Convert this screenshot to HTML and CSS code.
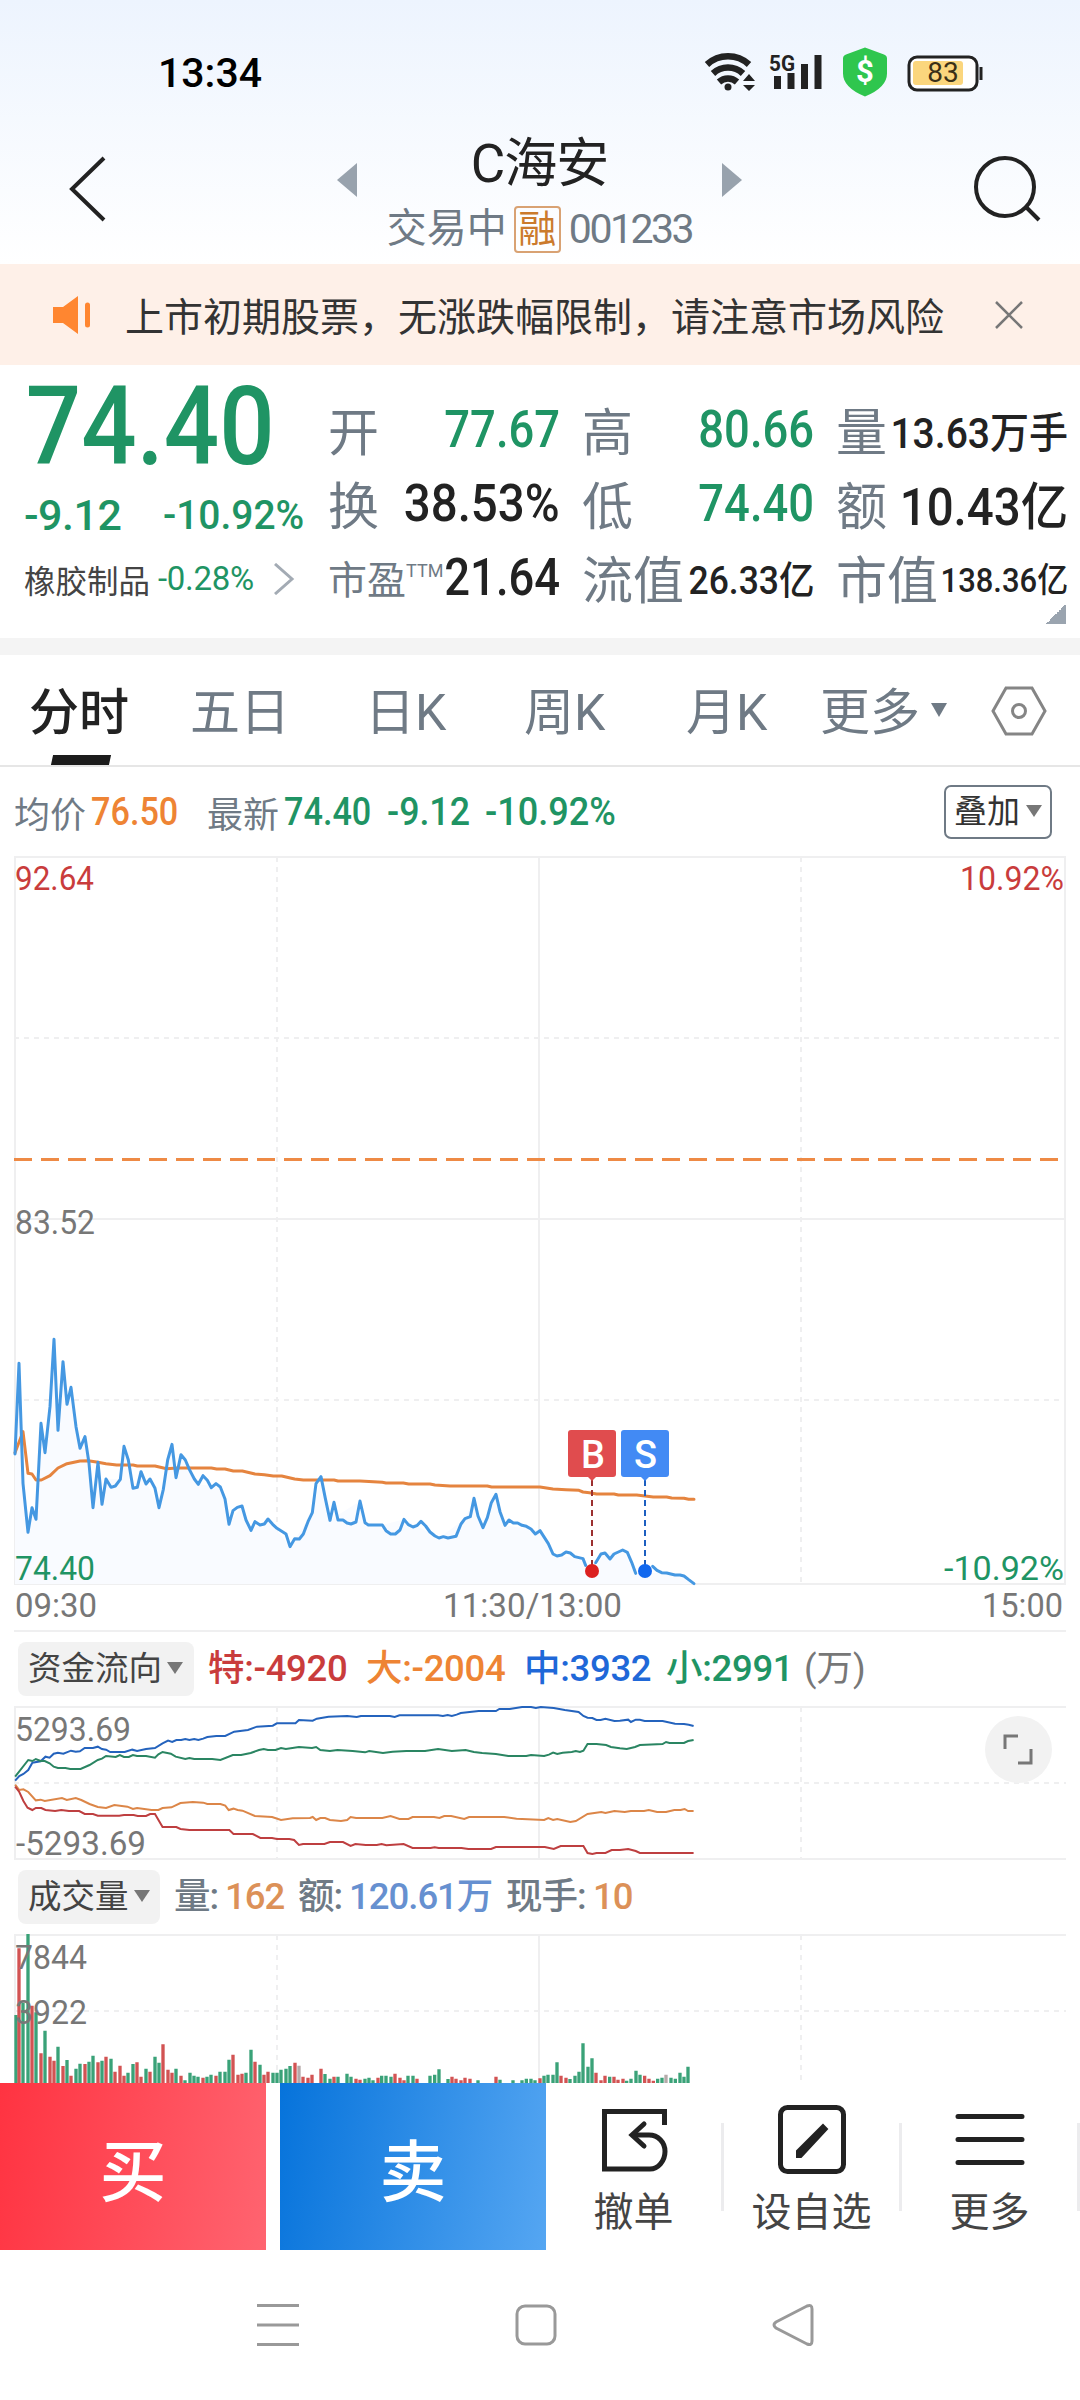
FILE: index.html
```html
<!DOCTYPE html>
<html lang="zh-CN">
<head>
  <meta charset="UTF-8">
  <meta name="viewport" content="width=device-width, initial-scale=1.0">
  <title>C海安 001233</title>
  <link rel="stylesheet" href="styles.css">
</head>
<body>
  <div class="phone">
    <div class="top">
      <!-- Status bar -->
      <div class="status-bar">
        <div class="clock">13:34</div>
        <svg class="status-icons" width="282" height="56" viewBox="702 44 282 56">
          <g fill="none" stroke="#222" stroke-width="6.500">
            <path d="M707 64.500a31 31 0 0 1 42 0"/>
            <path d="M713 73.500a22 22 0 0 1 30 0"/>
            <path d="M719 82a13.500 13.500 0 0 1 18 0"/>
          </g>
          <circle cx="728" cy="87" r="3.500" fill="#222"/>
          <path d="M743 81l6-7 6 7zM743 85l6 6 6-6z" fill="#222"/>
          <text class="net" x="769" y="71" textLength="26" lengthAdjust="spacingAndGlyphs">5G</text>
          <path d="M777.500 76v13M791 73v16M804.500 64v25M818 55v34" stroke="#222" stroke-width="7"/>
          <path d="M865 47.500l19 7q3 1 3 4v15q0 14-22 23q-22-9-22-23v-15q0-3 3-4z" fill="#2fc64e"/>
          <text class="dollar" x="865" y="82">$</text>
          <rect x="909" y="57" width="68" height="33" rx="8" fill="#fff" stroke="#222" stroke-width="3"/>
          <rect x="913" y="61" width="50" height="24" rx="3" fill="#fbd67d"/>
          <path d="M981 67v13" stroke="#222" stroke-width="3"/>
          <text class="battery" x="943" y="82">83</text>
        </svg>
      </div>

      <!-- Header -->
      <div class="header">
        <svg class="back" width="44" height="70" viewBox="0 0 44 70"><path d="M38 4L6 35l32 31"/></svg>
        <svg class="arrow" width="20" height="34" viewBox="0 0 20 34"><path d="M20 0v34L0 17z"/></svg>
        <div class="stock">
          <div class="stock-name">C海安</div>
          <div class="stock-sub">
            <span class="trading">交易中</span>
            <span class="badge">融</span>
            <span class="code">001233</span>
          </div>
        </div>
        <svg class="arrow" width="20" height="34" viewBox="0 0 20 34"><path d="M0 0v34l20-17z"/></svg>
        <svg class="search" width="72" height="70" viewBox="0 0 72 70"><circle cx="34" cy="34" r="29"/><path d="M55 54l13 13"/></svg>
      </div>
    </div>

    <!-- Notice -->
    <div class="notice">
      <svg width="38" height="38" viewBox="0 0 38 38"><path d="M0 11h10L25 0v38L10 27H0z" fill="#ff8630"/><path d="M34.500 9v20" stroke="#ff8630" stroke-width="5" stroke-linecap="round"/></svg>
      <span class="notice-text">上市初期股票，无涨跌幅限制，请注意市场风险</span>
      <svg width="30" height="30" viewBox="0 0 30 30"><path d="M2 2l26 26M28 2L2 28" stroke="#777" stroke-width="2.500"/></svg>
    </div>

    <!-- Quote -->
    <div class="quote">
      <div class="quote-main">
        <div class="price">74.40</div>
        <div class="change"><span class="diff">-9.12</span><span class="pct">-10.92%</span></div>
        <div class="sector">
          <span class="sector-name">橡胶制品</span>
          <span class="sector-pct">-0.28%</span>
          <svg width="22" height="32" viewBox="0 0 22 32"><path d="M2 1l17 15L2 31"/></svg>
        </div>
      </div>
      <div class="quote-grid">
        <div class="cell"><span class="label">开</span><span class="value green">77.67</span></div>
        <div class="cell"><span class="label">高</span><span class="value green">80.66</span></div>
        <div class="cell"><span class="label">量</span><span class="value m">13.63万手</span></div>
        <div class="cell"><span class="label">换</span><span class="value wide">38.53%</span></div>
        <div class="cell"><span class="label">低</span><span class="value green">74.40</span></div>
        <div class="cell"><span class="label">额</span><span class="value wide">10.43亿</span></div>
        <div class="cell"><span class="label small">市盈<sup>TTM</sup></span><span class="value">21.64</span></div>
        <div class="cell"><span class="label">流值</span><span class="value s">26.33亿</span></div>
        <div class="cell"><span class="label">市值</span><span class="value xs">138.36亿</span></div>
      </div>
      <div class="corner"></div>
    </div>

    <!-- Tabs -->
    <div class="tabs">
      <div class="tab active">分时</div>
      <div class="tab">五日</div>
      <div class="tab">日K</div>
      <div class="tab">周K</div>
      <div class="tab">月K</div>
      <div class="tab more">更多<i class="caret"></i></div>
      <svg class="setting" width="56" height="50" viewBox="0 0 56 50"><path d="M15 2h26l13 23-13 23H15L2 25z"/><circle cx="28" cy="25" r="6.500"/></svg>
    </div>

    <div class="summary">
      <span class="grey">均价</span><span class="num orange avg">76.50</span>
      <span class="grey">最新</span><span class="num green last">74.40</span>
      <span class="num green diff2">-9.12</span><span class="num green pct2">-10.92%</span>
      <button class="overlay-btn">叠加<i class="caret"></i></button>
    </div>

    <!-- Time-share chart -->
    <svg class="chart" width="1080" height="777" viewBox="0 0 1080 777">
      <g class="axis">
        <path d="M14 2H1066M14 364H1066M14 729H1066M15 2V729M539 2V729M1065 2V729M14 776H1066"/>
        <path class="dash" d="M14 183H1066M14 545H1066M277 2V729M801 2V729"/>
      </g>
      <path class="limit" d="M14 304.500H1062"/>
      <g transform="translate(0 445) scale(.33333)">
        <path class="area" d="M45 852V462L57 190 69 550 84 697 96 623 108 658 123 370 135 458 150 320 162 118 174 391 189 185 201 313 213 262 228 380 240 445 255 410 279 623 294 487 306 613 318 537 361 538 372 439 399 565 423 515 477 623 516 433 528 533 543 464 595 553 661 561 687 673 726 618 753 691 804 657 870 740 937 638 963 530 990 661 1080 603 1095 668 1147 675 1212 658 1317 714 1395 656 1422 595 1449 683 1488 583 1515 676 1620 692 1671 768 1749 776 1776 815 1815 759 1868 750 1908 820 2000 819 2052 828 2082 852z"/>
        <polyline class="avg-line" points="45,458 69,395 84,520 96,522 108,540 124,540 150,527 174,504 201,491 240,483 265,482 294,487 318,491 350,495 399,495 412,498 465,498 500,506 530,504 634,504 650,507 675,507 700,513 727,513 765,522 793,524 820,528 845,528 884,537 910,540 1002,540 1014,543 1080,543 1147,547 1158,549 1210,549 1226,552 1290,552 1305,555 1350,558 1462,558 1475,561 1620,561 1659,567 1698,569 1737,571 1749,576 1768,578 1790,582 1842,582 1855,585 1910,585 1935,588 1960,591 2000,591 2015,594 2052,595 2066,598 2082,598"/>
        <polyline class="price-line" points="45,462 57,190 69,550 84,697 96,623 108,658 123,370 135,458 150,320 162,118 174,391 189,185 201,313 213,262 228,380 240,445 255,410 267,490 279,623 294,487 306,613 318,537 333,562 346,558 361,538 372,439 385,480 399,565 412,562 423,515 438,552 450,537 465,565 477,623 490,568 503,480 516,433 528,533 543,464 556,480 568,508 583,537 595,553 609,527 622,541 634,563 648,551 661,561 675,597 687,673 699,632 712,622 726,618 738,660 753,691 765,665 780,675 793,672 804,657 818,673 831,685 858,702 870,740 884,716 898,717 910,702 924,665 937,638 948,551 963,530 976,595 990,661 1002,607 1014,660 1029,660 1041,669 1053,672 1068,666 1080,603 1095,668 1105,675 1147,675 1158,692 1172,702 1186,702 1200,690 1212,658 1225,674 1239,681 1252,676 1263,664 1277,678 1290,696 1305,708 1317,714 1330,710 1344,714 1368,709 1383,672 1395,656 1411,650 1422,595 1434,648 1449,683 1462,653 1474,608 1488,583 1500,635 1515,676 1527,660 1540,669 1553,669 1566,676 1579,679 1593,687 1606,702 1620,692 1645,731 1659,762 1671,768 1685,765 1698,756 1711,759 1724,770 1749,776 1757,796"/>
        <polyline class="price-line" points="1787,788 1803,762 1815,759 1830,777 1842,762 1868,750 1882,757 1895,787 1907,820"/>
        <polyline class="price-line" points="1958,799 1971,811 1985,818 2000,819 2025,825 2040,825 2052,828 2066,839 2082,851"/>
      </g>
      <!-- Buy / sell marks -->
      <path d="M592 625V714" stroke="#9c3030" stroke-width="2" stroke-dasharray="6 4"/>
      <path d="M645 625V714" stroke="#1d5fc0" stroke-width="2" stroke-dasharray="6 4"/>
      <circle cx="592" cy="716" r="7" fill="#dc2020"/>
      <circle cx="645" cy="716" r="7" fill="#1268ee"/>
      <path d="M571 575h42q3 0 3 3v41q0 3-3 3h-17l-4 4-4-4h-17q-3 0-3-3v-41q0-3 3-3z" fill="#e04c4e"/>
      <path d="M624 575h42q3 0 3 3v41q0 3-3 3h-17l-4 4-4-4h-17q-3 0-3-3v-41q0-3 3-3z" fill="#428af4"/>
      <text class="mark" x="593" y="613">B</text>
      <text class="mark" x="645.500" y="613">S</text>
      <g class="scale">
        <text class="red" x="15" y="35" textLength="79" lengthAdjust="spacingAndGlyphs">92.64</text>
        <text class="red" x="960" y="35" textLength="104" lengthAdjust="spacingAndGlyphs">10.92%</text>
        <text x="15" y="379" textLength="80" lengthAdjust="spacingAndGlyphs">83.52</text>
        <text class="green" x="15" y="725" textLength="80" lengthAdjust="spacingAndGlyphs">74.40</text>
        <text class="green" x="944" y="725" textLength="120" lengthAdjust="spacingAndGlyphs">-10.92%</text>
        <text x="15" y="762" textLength="82" lengthAdjust="spacingAndGlyphs">09:30</text>
        <text x="443" y="762" textLength="179" lengthAdjust="spacingAndGlyphs">11:30/13:00</text>
        <text x="982" y="762" textLength="81" lengthAdjust="spacingAndGlyphs">15:00</text>
      </g>
    </svg>

    <!-- Fund flow -->
    <div class="sub-head">
      <span class="pill">资金流向<i class="caret"></i></span>
      <span class="item red">特:-4920</span>
      <span class="item orange">大:-2004</span>
      <span class="item blue">中:3932</span>
      <span class="item green">小:2991</span>
      <span class="unit">(万)</span>
    </div>
    <div class="fund">
      <svg class="chart" width="1080" height="156" viewBox="0 0 1080 156">
        <g class="axis">
          <path d="M14 2H1066M14 154H1066M15 2V154M539 2V154"/>
          <path class="dash" d="M14 78H1066M277 2V154M801 2V154"/>
        </g>
        <g class="scale">
          <text x="15" y="36" textLength="116" lengthAdjust="spacingAndGlyphs">5293.69</text>
          <text x="16" y="150" textLength="130" lengthAdjust="spacingAndGlyphs">-5293.69</text>
        </g>
        <g class="flow" transform="translate(0 -85) scale(.34439 .33333)">
          <polyline stroke="#2463bd" points="44,482 56,468 68,462 82,450 94,428 118,424 132,410 144,413 156,401 168,398 184,401 206,392 220,395 232,394 246,384 270,384 284,380 296,387 308,389 320,396 362,396 384,389 398,393 424,387 450,384 472,370 488,362 500,366 512,360 526,360 538,357 550,360 564,357 576,360 590,356 602,351 628,348 654,348 680,335 720,330 746,320 792,317 804,310 858,310 868,300 908,302 920,296 954,290 1008,288 1036,291 1048,288 1132,288 1146,291 1160,286 1272,286 1286,288 1300,285 1312,288 1326,284 1338,279 1390,273 1440,273 1450,267 1480,267 1516,261 1542,261 1556,264 1570,261 1608,264 1640,270 1680,276 1694,288 1706,293 1720,294 1732,300 1744,300 1758,296 1784,303 1800,302 1824,299 1832,306 1846,299 1858,299 1872,303 1924,303 1960,311 1986,312 2000,314 2014,318"/>
          <polyline stroke="#2a8562" points="44,470 82,420 94,423 104,417 118,423 130,423 144,430 156,440 168,444 190,444 204,447 234,447 260,435 284,420 296,416 308,408 336,411 348,405 360,411 374,411 386,405 398,408 424,408 450,413 460,403 472,396 496,401 510,410 538,417 550,414 564,417 616,417 640,420 676,405 700,405 728,399 752,390 766,387 778,390 800,390 816,384 830,387 868,381 906,384 918,381 930,390 958,393 980,390 1024,393 1060,397 1072,393 1112,399 1140,395 1180,393 1234,393 1272,387 1312,393 1352,390 1376,396 1400,399 1440,402 1476,408 1528,408 1542,405 1580,408 1594,404 1606,398 1618,402 1634,398 1660,396 1672,393 1684,396 1694,392 1706,372 1732,372 1760,375 1774,381 1800,385 1820,387 1844,381 1858,375 1924,372 1934,366 1944,369 1986,369 1998,363 2014,360"/>
          <polyline stroke="#dc8648" points="44,494 56,510 68,508 82,516 104,541 118,539 130,543 180,534 194,540 220,534 236,540 260,552 284,561 308,564 332,555 370,560 386,567 398,564 440,570 460,570 472,564 498,562 524,549 560,546 590,548 602,552 640,552 654,557 664,570 678,566 690,570 704,572 740,588 790,591 816,600 850,595 900,594 908,591 918,600 930,594 944,594 958,600 990,603 1008,600 1018,591 1034,594 1110,594 1134,588 1160,597 1186,597 1198,591 1260,591 1276,594 1290,588 1310,588 1348,597 1362,591 1464,591 1500,596 1580,600 1592,594 1606,600 1618,597 1656,606 1672,603 1706,582 1746,576 1758,579 1784,573 1814,576 1832,573 1870,573 1884,570 1908,576 1934,576 1958,570 1976,570 1988,567 1998,573 2014,573"/>
          <polyline stroke="#be3f40" points="44,500 56,516 68,543 80,563 94,570 104,564 120,564 132,570 160,573 178,570 200,573 230,573 246,582 270,582 284,587 346,587 360,585 388,585 400,588 424,588 436,582 450,582 472,621 512,621 524,627 550,630 666,630 678,642 734,642 756,654 790,654 804,657 840,657 854,660 868,675 880,672 942,672 958,666 996,666 1018,678 1032,672 1062,675 1094,675 1108,672 1122,676 1172,672 1198,684 1250,684 1262,682 1274,684 1340,684 1360,687 1426,687 1440,681 1582,681 1608,687 1628,678 1694,678 1706,699 1720,702 1732,699 1758,699 1776,690 1800,690 1824,687 1846,693 1858,699 2014,699"/>
        </g>
      </svg>
      <div class="expand"><svg width="30" height="31" viewBox="0 0 30 31"><path d="M15 2H2v13M28 15v14H15"/></svg></div>
    </div>

    <!-- Volume -->
    <div class="sub-head volume-head">
      <span class="pill">成交量<i class="caret"></i></span>
      <span class="item grey">量:</span><span class="item vol-orange">162</span>
      <span class="item grey">额:</span><span class="item vol-blue">120.61万</span>
      <span class="item grey last-label">现手:</span><span class="item vol-orange">10</span>
    </div>
    <svg class="chart" width="1080" height="150" viewBox="0 0 1080 150">
      <g class="axis">
        <path d="M14 2H1066M15 2V150M539 2V150"/>
        <path class="dash" d="M14 78H1066M277 2V150M801 2V150"/>
      </g>
      <g class="bars" transform="translate(0 -73) scale(.33333)">
        <path stroke="#3aa278" d="M48 669V465M69 669V428M84 669V222M108 669V457M135 669V512M174 669V560M201 669V600M228 669V626M240 669V611M267 669V605M279 669V587M306 669V602M333 669V596M384 669V638M399 669V612M438 669V626M465 669V590M477 669V608M528 669V626M555 669V661M570 669V638M582 669V647M594 669V650M621 669V650M633 669V644M660 669V635M675 669V635M687 669V599M738 669V638M753 669V569M780 669V614M819 669V638M831 669V638M843 669V629M858 669V626M870 669V618M975 669V642M990 669V656M1014 669V650M1041 669V641M1053 669V650M1095 669V656M1107 669V653M1119 669V661M1145 669V647M1158 669V647M1173 669V650M1224 669V647M1239 669V647M1290 669V647M1304 669V644M1317 669V628M1344 669V657M1434 669V661M1500 669V659M1539 669V661M1566 669V661M1579 669V656M1593 669V656M1605 669V661M1632 669V647M1644 669V644M1659 669V644M1671 669V607M1710 669V657M1725 669V647M1737 669V635M1749 669V550M1764 669V620M1776 669V595M1829 669V650M1880 669V662M1893 669V656M1908 669V632M1920 669V644M1973 669V656M1986 669V653M2013 669V653M2026 669V656M2040 669V638M2052 669V650M2064 669V620"/>
        <path stroke="#d25353" d="M57 669V265M96 669V437M123 669V580M150 669V590M162 669V602M189 669V618M213 669V647M255 669V612M294 669V607M318 669V590M345 669V635M360 669V617M372 669V647M411 669V607M423 669V650M450 669V635M489 669V553M504 669V629M516 669V638M543 669V647M609 669V653M648 669V647M699 669V584M714 669V644M726 669V641M765 669V605M792 669V644M804 669V635M885 669V608M909 669V650M924 669V653M936 669V644M963 669V626M1002 669V650M1068 669V656M1080 669V659M1134 669V653M1185 669V641M1200 669V653M1212 669V661M1251 669V656M1356 669V650M1368 669V656M1383 669V661M1395 669V653M1410 669V656M1488 669V650M1620 669V655M1683 669V647M1698 669V653M1788 669V638M1803 669V661M1815 669V647M1842 669V650M1854 669V659M1869 669V656M1934 669V647M1947 669V656M1960 669V662"/>
        <path stroke="#b5aaaa" d="M897 669V617M1998 669V644"/>
      </g>
      <g class="scale">
        <text x="15" y="36" textLength="72" lengthAdjust="spacingAndGlyphs">7844</text>
        <text x="15" y="91" textLength="72" lengthAdjust="spacingAndGlyphs">3922</text>
      </g>
    </svg>

    <!-- Trade bar -->
    <div class="trade-bar">
      <button class="trade buy">买</button>
      <button class="trade sell">卖</button>
      <div class="actions">
        <div class="action">
          <svg width="70" height="70" viewBox="0 0 70 70"><path d="M65.500 21V7.500H5.500V65H51c8 0 15-8 15-17.500S59 31 50 31H34"/><path d="M45 20L33 31l12 11" stroke-linecap="round"/></svg>
          <span>撤单</span>
        </div>
        <div class="action">
          <svg width="70" height="70" viewBox="0 0 70 70"><rect x="3.500" y="3.500" width="63" height="64" rx="7"/><path d="M20 53v-6L46 21l4 4L24 53z" fill="#222" stroke-width="2"/></svg>
          <span>设自选</span>
        </div>
        <div class="action">
          <svg width="70" height="70" viewBox="0 0 70 70"><path d="M3 12.500h64M3 35.500h64M3 58.500h64" stroke-linecap="round"/></svg>
          <span>更多</span>
        </div>
      </div>
    </div>

    <!-- System navigation -->
    <div class="nav-bar">
      <svg width="44" height="44" viewBox="0 0 44 44"><path d="M1 2.500h42M1 22h42M1 41.500h42"/></svg>
      <svg width="44" height="44" viewBox="0 0 44 44"><rect x="3" y="3" width="38" height="38" rx="8"/></svg>
      <svg width="44" height="44" viewBox="0 0 44 44"><path d="M4 19L35 3q5-2 5 3v32q0 5-5 3L4 25q-4-3 0-6z"/></svg>
    </div>
  </div>
</body>
</html>
```
FILE: styles.css
```css
:root {
  --green: #1f9464;
  --red: #c93c3c;
  --orange: #ee8434;
  --blue: #1f68d8;
  --grey: #6f7a85;
  --dark: #222;
}

* {
  box-sizing: border-box;
}

body {
  margin: 0;
  background: #fff;
  font-family: Roboto, "Noto Sans CJK SC", sans-serif;
  color: var(--dark);
}

.phone {
  width: 1080px;
  height: 2400px;
  overflow: hidden;
  background: #fff;
}

svg {
  display: block;
  flex-shrink: 0;
}

.green { color: var(--green); fill: var(--green); }
.red { color: var(--red); fill: var(--red); }
.orange { color: var(--orange); }
.blue { color: var(--blue); }
.grey { color: var(--grey); }

/* Status bar + header */
.top {
  height: 264px;
  background: linear-gradient(#edf4fe, #fff);
}

.status-bar {
  height: 144px;
  padding: 0 96px 0 158px;
  display: flex;
  justify-content: space-between;
  align-items: center;
}

.clock {
  padding-top: 2px;
  font-size: 41px;
  font-weight: 500;
  color: #000;
}

.net {
  font-size: 22px;
  font-weight: 700;
  fill: #222;
}

.dollar {
  font-size: 31px;
  font-weight: 700;
  fill: #fff;
  text-anchor: middle;
}

.battery {
  font-size: 28px;
  fill: #3a3017;
  text-anchor: middle;
}

.header {
  height: 120px;
  padding: 0 37px 0 66px;
  display: flex;
}

.header svg {
  fill: none;
  stroke: var(--dark);
  stroke-width: 4;
}

.header .back { margin: 10px 227px 0 0; }
.header .search { margin: 9px 0 0 auto; }

.header .arrow {
  margin-top: 19px;
  fill: #98a2ad;
  stroke: none;
}

.stock {
  width: 365px;
  text-align: center;
}

.stock-name {
  height: 58px;
  margin-top: -9px;
  font-size: 53px;
  line-height: 58px;
  letter-spacing: -1px;
}

.stock-sub {
  height: 48px;
  margin-top: 12px;
  display: flex;
  justify-content: center;
  align-items: center;
  color: var(--grey);
  font-size: 40px;
  line-height: 48px;
}

.code {
  font-size: 41px;
  letter-spacing: -2.500px;
}

.badge {
  width: 47px;
  height: 47px;
  margin: 0 8px 0 7px;
  border: 2px solid #d9a273;
  border-radius: 4px;
  color: #cb7a2c;
  font-size: 38px;
  line-height: 43px;
}

.notice {
  height: 101px;
  padding: 0 56px 0 53px;
  display: flex;
  align-items: center;
  background: #fef0e8;
}

.notice-text {
  margin: -2px auto 0 34px;
  font-size: 39px;
  color: #333;
}

/* Quote */
.quote {
  position: relative;
  height: 273px;
  padding-left: 24px;
  display: flex;
}

.quote-main {
  width: 304px;
  white-space: nowrap;
}

.price {
  height: 122px;
  padding-left: 2px;
  font-size: 109px;
  font-weight: 500;
  line-height: 124px;
  color: var(--green);
  transform: scaleX(0.895);
  transform-origin: left;
}

.change {
  height: 55px;
  display: flex;
  align-items: center;
  color: var(--green);
  font-size: 43px;
  font-weight: 500;
}

.change .diff {
  width: 139px;
  letter-spacing: -0.500px;
}

.change .pct {
  font-size: 41px;
  transform: scaleX(0.95);
  transform-origin: left;
}

.sector {
  height: 73px;
  display: flex;
  align-items: center;
}

.sector-name {
  width: 134px;
  font-size: 31.500px;
  color: #444;
}

.sector-pct {
  width: 115px;
  font-size: 33px;
  letter-spacing: -0.300px;
  color: var(--green);
}

.sector svg {
  fill: none;
  stroke: #a3abb4;
  stroke-width: 3;
}

.quote-grid {
  display: grid;
  grid-template-columns: 232px 232px 232px;
  grid-template-rows: 74px 74px 74px;
  column-gap: 22px;
  padding-top: 27px;
}

.cell {
  display: flex;
  justify-content: space-between;
  align-items: center;
  white-space: nowrap;
}

.label {
  color: var(--grey);
  font-size: 51px;
}

.label.small { font-size: 39px; }

.label sup {
  font-size: 18px;
  line-height: 1;
  vertical-align: 17px;
}

/* digits are condensed towards the right edge of the cell */
.value {
  margin-left: -30px;
  font-size: 51px;
  font-weight: 500;
  transform: scaleX(0.89);
  transform-origin: right;
}

.value.wide { transform: scaleX(0.93); }
.value.m { font-size: 42px; transform: scaleX(0.93); }
.value.s { font-size: 39px; transform: scaleX(0.91); }
.value.xs { font-size: 34px; transform: scaleX(0.91); }

.corner {
  position: absolute;
  right: 14px;
  bottom: 14px;
  width: 20px;
  height: 20px;
  background: linear-gradient(135deg, transparent 50%, #9aa4af 50%);
}

/* Tabs */
.tabs {
  height: 129px;
  padding: 0 33px 0 29px;
  border-top: 17px solid #f4f4f4;
  border-bottom: 2px solid #e6e6e6;
  display: flex;
  align-items: center;
  font-size: 50px;
  color: var(--grey);
}

.tab {
  position: relative;
  width: 161px;
  height: 110px;
  line-height: 117px;
  white-space: nowrap;
}

.tab.active {
  font-weight: 500;
  color: var(--dark);
}

.tab.active::after {
  content: '';
  position: absolute;
  left: 23px;
  bottom: 0;
  width: 58px;
  height: 10px;
  background: #1c1c1c;
  transform: skewX(-12deg);
}

.tab:nth-child(2) { width: 175px; }
.tab:nth-child(3) { width: 159px; }
.tab:nth-child(4) { width: 162px; }
.tab:nth-child(5) { width: 134px; }

.caret {
  display: inline-block;
  border: 8px solid transparent;
  border-top: 12px solid #777;
  border-bottom: 0;
  vertical-align: middle;
}

.more .caret {
  margin: -14px 0 0 11px;
  border-top: 14px solid var(--grey);
}

.setting {
  margin: 2px 0 0 auto;
  fill: none;
  stroke: #858585;
  stroke-width: 3;
}

.summary {
  height: 88px;
  padding: 2px 28px 0 14px;
  display: flex;
  align-items: center;
  font-size: 36px;
}

.num {
  font-size: 38px;
  font-weight: 500;
  transform: scaleX(0.9);
  transform-origin: left;
}

.avg { width: 116px; margin-left: 5px; }
.last { width: 103px; margin-left: 5px; }
.diff2 { width: 98px; transform: scaleX(0.94); }
.pct2 { transform: scaleX(0.95); }

.overlay-btn {
  width: 108px;
  height: 54px;
  margin-left: auto;
  padding: 0;
  border: 2px solid #6f7a85;
  border-radius: 7px;
  background: #fff;
  color: #333;
  font-family: inherit;
  font-size: 33px;
  line-height: 50px;
}

.overlay-btn .caret {
  margin: -6px 0 0 6px;
}

/* Charts */
.axis path {
  fill: none;
  stroke: #efeff0;
  stroke-width: 2;
}

.axis .dash {
  stroke-dasharray: 5 5;
}

.limit {
  stroke: #ee8a45;
  stroke-width: 3;
  stroke-dasharray: 18 9;
}

.area { fill: #f9fbff; }

.avg-line, .price-line {
  fill: none;
  stroke-width: 9;
  stroke-linejoin: round;
  stroke-linecap: round;
}

.avg-line { stroke: #e5843f; }
.price-line { stroke: #4598e2; }

.mark {
  font-size: 38px;
  font-weight: 500;
  fill: #fff;
  text-anchor: middle;
}

.scale text {
  font-size: 34px;
}

.scale text:not([class]) {
  fill: #777;
}

.sub-head {
  height: 73px;
  padding: 10px 18px;
  display: flex;
  font-size: 36.500px;
  line-height: 54px;
  white-space: nowrap;
}

.pill {
  width: 176px;
  height: 54px;
  margin-right: 14px;
  padding-left: 10px;
  border-radius: 8px;
  background: #f2f2f2;
  color: #444;
  font-size: 33.500px;
}

.pill .caret {
  margin: -6px 0 0 5px;
}

.item {
  font-weight: 500;
  letter-spacing: -0.300px;
}

.sub-head .red, .sub-head .orange { width: 158px; }
.sub-head .blue { width: 142px; }
.sub-head .green { width: 138px; }
.unit { color: #777; }

.fund {
  position: relative;
  height: 156px;
}

.flow polyline {
  fill: none;
  stroke-width: 2;
  vector-effect: non-scaling-stroke;
}

.expand {
  position: absolute;
  top: 11px;
  right: 28px;
  width: 67px;
  height: 67px;
  padding: 18px;
  border-radius: 50%;
  background: #f2f2f2;
}

.expand path {
  fill: none;
  stroke: #777;
  stroke-width: 3;
}

.volume-head {
  height: 72px;
  padding-top: 9px;
}

.volume-head .item { letter-spacing: -1px; }
.volume-head .pill { width: 142px; }
.volume-head .grey { width: 51px; }
.volume-head .last-label { width: 87px; }
.volume-head .vol-orange { width: 73px; }
.volume-head .vol-blue { width: 157px; }
.vol-orange { color: #dc9158; }
.vol-blue { color: #6690d0; }

.bars path {
  stroke-width: 10;
}

/* Trade bar */
.trade-bar {
  height: 167px;
  display: flex;
  background: #fff;
}

.trade {
  width: 266px;
  margin-right: 14px;
  padding: 0;
  border: none;
  color: #fff;
  font-family: inherit;
  font-size: 67px;
  font-weight: 500;
}

.buy { background: linear-gradient(100deg, #ff3341, #ff6470); }
.sell { background: linear-gradient(100deg, #0673db, #55a6f2); }

.actions {
  display: flex;
  margin-left: -14px;
}

.action {
  width: 178px;
  height: 88px;
  margin-top: 40px;
  border-right: 3px solid #ececee;
  display: flex;
  flex-direction: column;
  align-items: center;
}

.action svg {
  margin-top: -19px;
  fill: none;
  stroke: #222;
  stroke-width: 5;
}

.action span {
  margin-top: 9px;
  font-size: 40px;
  line-height: 60px;
  color: #444;
}

.nav-bar {
  height: 150px;
  padding: 0 264px 0 256px;
  display: flex;
  justify-content: space-between;
  align-items: center;
}

.nav-bar svg {
  fill: none;
  stroke: #999;
  stroke-width: 3;
}
```
